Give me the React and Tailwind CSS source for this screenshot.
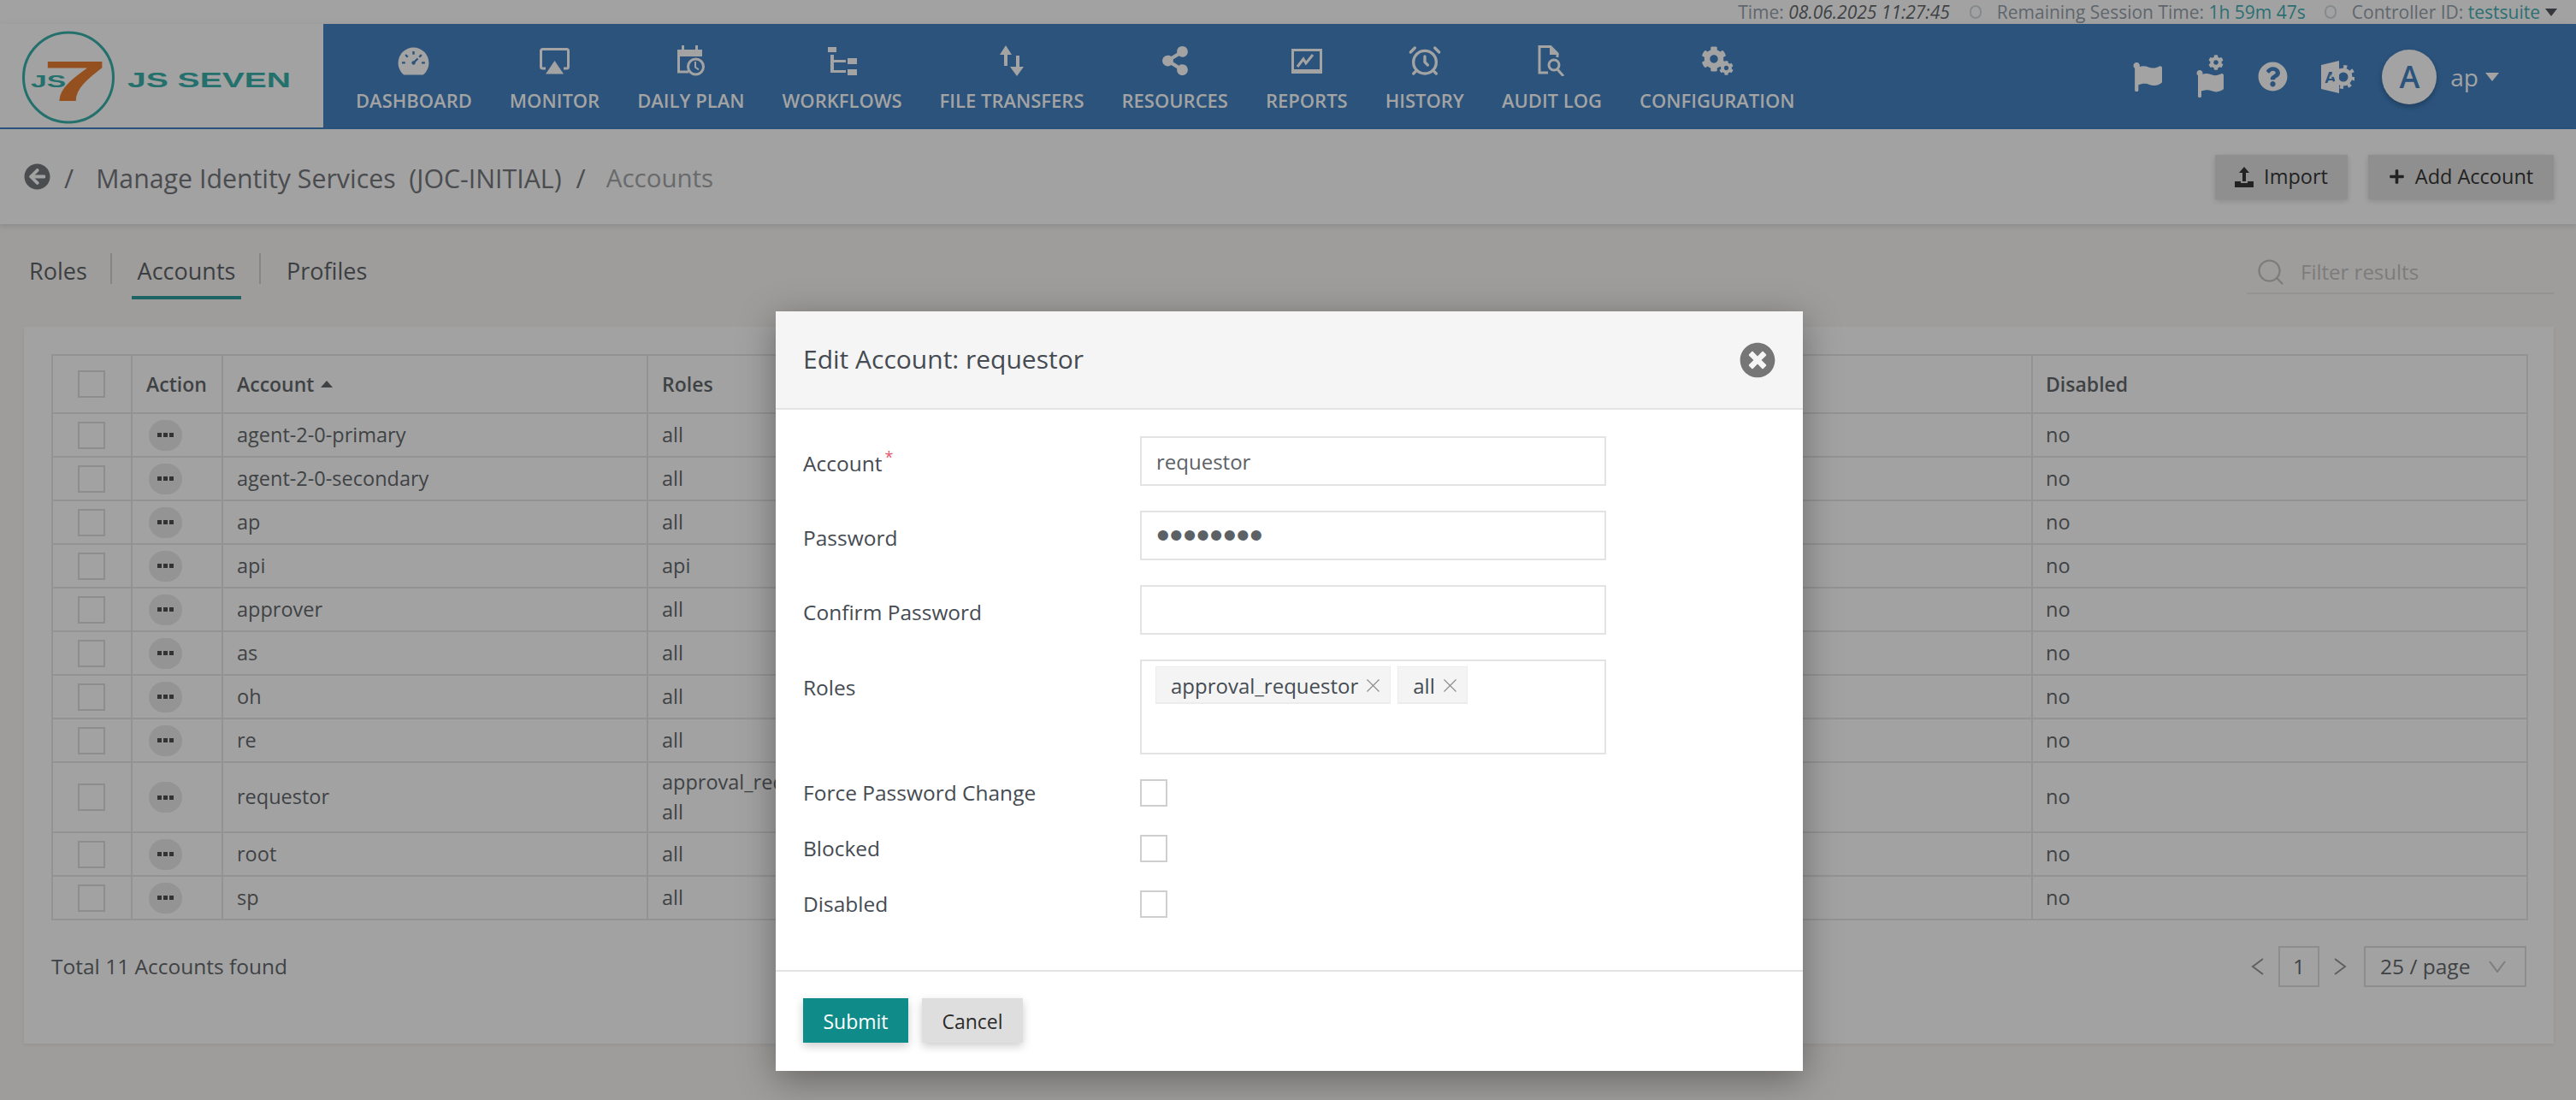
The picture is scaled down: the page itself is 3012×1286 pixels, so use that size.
import { AlarmClock, Search, X } from 'lucide-react'
import { AiFillDashboard } from 'react-icons/ai'
import { FaShareAlt, FaFlag, FaQuestionCircle, FaArrowCircleLeft, FaTimesCircle, FaPlus, FaCog } from 'react-icons/fa'

const ACCOUNTS = [
  { name: 'agent-2-0-primary', roles: ['all'] },
  { name: 'agent-2-0-secondary', roles: ['all'] },
  { name: 'ap', roles: ['all'] },
  { name: 'api', roles: ['api'] },
  { name: 'approver', roles: ['all'] },
  { name: 'as', roles: ['all'] },
  { name: 'oh', roles: ['all'] },
  { name: 're', roles: ['all'] },
  { name: 'requestor', roles: ['approval_requestor', 'all'] },
  { name: 'root', roles: ['all'] },
  { name: 'sp', roles: ['all'] },
]

function MonitorIcon() {
  return (
    <svg width="37" height="31" viewBox="0 0 37 31" fill="none">
      <path d="M8 24H4.500a2 2 0 0 1-2-2V3.500a2 2 0 0 1 2-2h28a2 2 0 0 1 2 2V22a2 2 0 0 1-2 2H29" stroke="#a3a3a3" strokeWidth="3" />
      <path d="M18.500 15L29 30.500H8z" fill="#a3a3a3" />
    </svg>
  )
}

function DailyPlanIcon() {
  return (
    <svg width="32" height="36" viewBox="0 0 32 36" fill="none">
      <path d="M5 0h3v5h13V0h3v5h5v8H0V5h5z" fill="#a3a3a3" />
      <path d="M1.500 12v19H13" stroke="#a3a3a3" strokeWidth="3" />
      <circle cx="21.500" cy="25" r="9" stroke="#a3a3a3" strokeWidth="3" />
      <path d="M21 19v6.500l4 3" stroke="#a3a3a3" strokeWidth="2" />
    </svg>
  )
}

function WorkflowIcon() {
  return (
    <svg width="34" height="33" viewBox="0 0 34 33" fill="#a3a3a3">
      <rect x="0" y="0" width="10" height="6" />
      <rect x="23" y="13" width="11" height="7" />
      <rect x="23" y="26" width="11" height="7" />
      <path d="M3 9h4v6h14v3H7v9h14v3H3z" />
    </svg>
  )
}

function TransferIcon() {
  return (
    <svg width="30" height="36" viewBox="0 0 30 36" fill="#a3a3a3">
      <path d="M8 0l7 11h-5v13H6V11H1z" />
      <path d="M20 12h4v13h5l-8 11-8-11h7z" />
    </svg>
  )
}

function ReportIcon() {
  return (
    <svg width="36" height="29" viewBox="0 0 36 29">
      <path d="M0 0h36v29H0zM3 3v21h30V3z" fill="#a3a3a3" />
      <path d="M7 21l7-9 3 5 8-10" fill="none" stroke="#a3a3a3" strokeWidth="3" />
    </svg>
  )
}

function AuditIcon() {
  return (
    <svg width="32" height="36" viewBox="0 0 32 36" fill="none">
      <path d="M12 32H2V1.500h13l8 8V14" stroke="#a3a3a3" strokeWidth="3" />
      <path d="M14 0l11 11H14z" fill="#a3a3a3" />
      <circle cx="19" cy="23" r="6" stroke="#a3a3a3" strokeWidth="3" />
      <path d="M23 28l7 8" stroke="#a3a3a3" strokeWidth="3" />
    </svg>
  )
}

function ConfigIcon() {
  return (
    <div className="relative w-[38px] h-[34px]">
      <FaCog size={30} className="absolute left-0 top-0" />
      <FaCog size={17} className="absolute right-0 bottom-0" />
    </div>
  )
}

const NAV = [
  { label: 'DASHBOARD', icon: <AiFillDashboard size={41} /> },
  { label: 'MONITOR', icon: <MonitorIcon /> },
  { label: 'DAILY PLAN', icon: <DailyPlanIcon /> },
  { label: 'WORKFLOWS', icon: <WorkflowIcon /> },
  { label: 'FILE TRANSFERS', icon: <TransferIcon /> },
  { label: 'RESOURCES', icon: <FaShareAlt size={34} /> },
  { label: 'REPORTS', icon: <ReportIcon /> },
  { label: 'HISTORY', icon: <AlarmClock size={40} strokeWidth={2} /> },
  { label: 'AUDIT LOG', icon: <AuditIcon /> },
  { label: 'CONFIGURATION', icon: <ConfigIcon /> },
]

function Logo() {
  return (
    <svg width="378" height="121" viewBox="0 28 378 121">
      <circle cx="80" cy="90.500" r="52.500" fill="none" stroke="#24706c" strokeWidth="3" />
      <text x="0" y="118" transform="translate(50 0) scale(2.050 1)" fontFamily="Liberation Sans" fontWeight="700" fontSize="66" fill="#95501f">7</text>
      <text x="36" y="102" fontFamily="Liberation Sans" fontWeight="700" fontSize="20" textLength="41" lengthAdjust="spacingAndGlyphs" fill="#24706c">JS</text>
      <text x="149" y="102" fontFamily="Liberation Sans" fontWeight="700" fontSize="23" textLength="191" lengthAdjust="spacingAndGlyphs" fill="#24706c">JS SEVEN</text>
    </svg>
  )
}

function TranslateIcon() {
  return (
    <svg width="39" height="38" viewBox="0 0 39 38">
      <path d="M0 5L21 0v38L0 33z" fill="#a3a3a3" />
      <text x="4" y="26" fontFamily="Liberation Sans" fontWeight="700" fontSize="19" fill="#2b537c">A</text>
      <circle cx="26" cy="19" r="8" fill="none" stroke="#a3a3a3" strokeWidth="5" />
      <circle cx="26" cy="19" r="12" fill="none" stroke="#a3a3a3" strokeWidth="4" strokeDasharray="4 5.400" />
    </svg>
  )
}

function Chevron({ d, width, height, stroke }) {
  return (
    <svg width={width} height={height} viewBox={`0 0 ${width} ${height}`} fill="none">
      <path d={d} stroke={stroke} strokeWidth="2" />
    </svg>
  )
}

function Checkbox({ dim }) {
  return <span className={`block w-[32px] h-[32px] border-2 ${dim ? 'border-[#8d8d8d]' : 'border-[#cfcfcf] bg-white'}`} />
}

function FormRow({ label, required, labelClass = '', alignTop, children }) {
  return (
    <div className={`flex ${alignTop ? 'items-start' : 'items-center'}`}>
      <label className={`w-[394px] shrink-0 text-[24.500px] leading-[32px] text-[#454b52] ${labelClass}`}>
        {label}
        {required && <span className="inline-block align-top -translate-y-[8px] text-[#e8566c] text-[18px] ml-[3px]">*</span>}
      </label>
      {children}
    </div>
  )
}

function TextBox({ children }) {
  return (
    <div className="w-[545px] h-[58px] border-2 border-[#e3e3e3] pl-[17px] flex items-center text-[24px] text-[#5c6166]">
      {children}
    </div>
  )
}

function RoleTag({ children }) {
  return (
    <span className="h-[44px] flex items-center gap-[4px] pl-[17px] pr-[6px] pt-[2px] bg-[#f4f4f4] border border-b-2 border-[#ececec] text-[24px] text-[#454b52]">
      {children}
      <X size={27} strokeWidth={1} className="text-[#8c8c8c]" />
    </span>
  )
}

function EditAccountModal() {
  return (
    <div className="absolute left-[907px] top-[364px] w-[1201px] h-[888px] bg-white shadow-[0_10px_40px_rgba(0,0,0,0.35)]">
      <div className="h-[115px] bg-[#f5f5f5] border-b-2 border-[#e3e3e3] px-[32px] flex items-center justify-between">
        <h2 className="text-[30px] text-[#454b52] font-normal -mt-[2px]">Edit Account: requestor</h2>
        <FaTimesCircle size={42} className="text-[#767676]" />
      </div>
      <div className="pl-[32px] pt-[31px] pb-[61px] flex flex-col gap-[29px]">
        <FormRow label="Account" required labelClass="pt-[5px]"><TextBox><span className="pt-[1px]">requestor</span></TextBox></FormRow>
        <FormRow label="Password" labelClass="pt-[5px]">
          <TextBox><span className="font-['Liberation_Sans',sans-serif] text-[44.500px] leading-none text-[#5c6166]">••••••••</span></TextBox>
        </FormRow>
        <FormRow label="Confirm Password" labelClass="pt-[5px]"><TextBox /></FormRow>
        <FormRow label="Roles" alignTop labelClass="mt-[17px]">
          <div className="w-[545px] h-[111px] border-2 border-[#e3e3e3] pl-[16px] pt-[6px] flex items-start gap-[8px]">
            <RoleTag>approval_requestor</RoleTag>
            <RoleTag>all</RoleTag>
          </div>
        </FormRow>
        <div className="flex flex-col gap-[33px]">
          <FormRow label="Force Password Change"><Checkbox /></FormRow>
          <FormRow label="Blocked"><Checkbox /></FormRow>
          <FormRow label="Disabled"><Checkbox /></FormRow>
        </div>
      </div>
      <div className="border-t-2 border-[#e3e3e3] pl-[32px] pt-[31px] flex gap-[16px]">
        <button className="w-[123px] h-[52px] pt-[2px] bg-[#0f8c89] text-white text-[23px] shadow-[0_4px_10px_rgba(0,0,0,0.2)]">Submit</button>
        <button className="w-[118px] h-[52px] pt-[2px] bg-[#dedede] text-[#2b2b2b] text-[23px] shadow-[0_4px_10px_rgba(0,0,0,0.2)]">Cancel</button>
      </div>
    </div>
  )
}

export default function App() {
  return (
    <div className="relative w-[3012px] h-[1286px] overflow-hidden bg-[#9e9d9b] font-['Open_Sans',sans-serif]">
      <div className="h-[28px] bg-[#a2a2a2] flex items-center justify-end pr-[22px] text-[21px] text-[#5f666d] leading-none">
        <span>Time: <i className="text-[#3f4245]">08.06.2025 11:27:45</i></span>
        <span className="w-[14px] h-[16px] ml-[23px] mr-[18px] rounded-full border-2 border-[#858a8d]" />
        <span>Remaining Session Time: <span className="text-[#2c6f73]">1h 59m 47s</span></span>
        <span className="w-[14px] h-[16px] ml-[22px] mr-[18px] rounded-full border-2 border-[#858a8d]" />
        <span>Controller ID: <span className="text-[#2c6f73]">testsuite</span></span>
        <span className="ml-[6px] w-0 h-0 border-x-[7px] border-x-transparent border-t-[9px] border-t-[#34383c]" />
      </div>

      <nav className="h-[123px] flex shadow-[0_6px_12px_rgba(0,0,0,0.15)] relative">
        <div className="w-[378px] bg-[#a2a2a2] border-b-2 border-[#2b537c] overflow-hidden">
          <Logo />
        </div>
        <div className="flex-1 bg-[#2b537c] flex items-start pl-[38px] text-[#a3a3a3]">
          <div className="flex gap-[44px]">
            {NAV.map(item => (
              <div key={item.label} className="flex flex-col items-center">
                <div className="h-[40px] mt-[23px] flex items-center justify-center">{item.icon}</div>
                <span className="mt-[10px] text-[22px] font-semibold leading-[32px] whitespace-nowrap">{item.label}</span>
              </div>
            ))}
          </div>
          <div className="ml-auto pr-[90px] h-full flex items-center gap-[40px]">
            <FaFlag size={34} />
            <div className="relative">
              <FaFlag size={32} className="mt-[16px]" />
              <FaCog size={18} className="absolute -top-[2px] right-0" />
            </div>
            <FaQuestionCircle size={35} />
            <div className="flex items-center gap-[32px] -ml-[1px]">
              <TranslateIcon />
              <div className="flex items-center">
                <span className="w-[64px] h-[64px] rounded-full bg-[#a3a3a3] flex items-center justify-center text-[36px] font-semibold text-[#2b537c] shadow-[0_3px_6px_rgba(0,0,0,0.25)]">A</span>
                <span className="ml-[16px] text-[28px]">ap</span>
                <span className="ml-[8px] w-0 h-0 border-x-[8px] border-x-transparent border-t-[10px] border-t-[#a3a3a3]" />
              </div>
            </div>
          </div>
        </div>
      </nav>

      <div className="h-[111px] bg-[#a2a2a2] flex items-center justify-between pl-[28px] pr-[26px] shadow-[0_3px_6px_rgba(0,0,0,0.1)] relative">
        <div className="flex items-center text-[30.300px] text-[#4a4c4f]">
          <FaArrowCircleLeft size={31} />
          <span className="ml-[16px] pt-[4px]">/</span>
          <span className="ml-[26px] pt-[4px] whitespace-pre">Manage Identity Services  (JOC-INITIAL)</span>
          <span className="ml-[17px] pt-[4px]">/</span>
          <span className="ml-[24px] pt-[4px] text-[29.500px] text-[#686a6c]">Accounts</span>
        </div>
        <div className="flex gap-[24px] text-[23.500px] text-[#222222]">
          <button className="w-[155px] h-[52px] bg-[#8f8f8f] flex items-center justify-center gap-[12px] shadow-[0_2px_6px_rgba(0,0,0,0.15)]">
            <svg width="22" height="24" viewBox="0 0 22 24" fill="#222222"><path d="M11 0l6 7h-4v10H9V7H5zM0 17h7v2h8v-2h7v7H0z" /></svg>
            Import
          </button>
          <button className="w-[217px] h-[52px] bg-[#8f8f8f] flex items-center justify-center gap-[12px] shadow-[0_2px_6px_rgba(0,0,0,0.15)]">
            <FaPlus size={19} />
            Add Account
          </button>
        </div>
      </div>

      <div className="h-[120px] flex items-start justify-between pl-[28px] pr-[26px]">
        <div className="flex items-start mt-[34px] text-[27px] text-[#3c3f42]">
          <span className="w-[101px] pl-[6px] h-[36px] leading-[42px]">Roles</span>
          <span className="w-[2px] h-[36px] bg-[#858585]" />
          <span className="ml-[23px] w-[128px] text-center h-[54px] leading-[42px] border-b-4 border-[#1e6464]">Accounts</span>
          <span className="ml-[21px] w-[2px] h-[36px] bg-[#858585]" />
          <span className="pl-[30px] h-[36px] leading-[42px]">Profiles</span>
        </div>
        <div className="w-[359px] h-[50px] mt-[32px] border-b-2 border-[#939393] flex items-center pl-[10px] gap-[17px] text-[24px] text-[#7c7c7c]">
          <Search size={36} strokeWidth={1.5} />
          Filter results
        </div>
      </div>

      <section className="ml-[28px] w-[2958px] h-[838px] bg-[#a2a2a2] shadow-[0_2px_4px_rgba(0,0,0,0.06)] pt-[32px] px-[32px]">
        <table className="w-[2894px] table-fixed border-collapse text-[23.500px] text-[#3f4245]">
          <colgroup>
            <col className="w-[93px]" />
            <col className="w-[106px]" />
            <col className="w-[497px]" />
            <col className="w-[1619px]" />
            <col className="w-[579px]" />
          </colgroup>
          <thead>
            <tr className="h-[68px] text-left">
              <th className="border-2 border-[#939393] px-[29px] font-normal"><Checkbox dim /></th>
              <th className="border-2 border-[#939393] pl-[16px] font-semibold text-[23px]">Action</th>
              <th className="border-2 border-[#939393] pl-[16px] font-semibold text-[23px]">
                <span className="inline-flex items-center gap-[8px]">
                  Account
                  <span className="w-0 h-0 border-x-[7px] border-x-transparent border-b-[8px] border-b-[#3f4245]" />
                </span>
              </th>
              <th className="border-2 border-[#939393] pl-[16px] font-semibold text-[23px]">Roles</th>
              <th className="border-2 border-[#939393] pl-[15px] font-semibold text-[23px]">Disabled</th>
            </tr>
          </thead>
          <tbody>
            {ACCOUNTS.map(acc => (
              <tr key={acc.name} className={acc.roles.length > 1 ? 'h-[82px]' : 'h-[51px]'}>
                <td className="border-2 border-[#939393] px-[29px] p-0"><Checkbox dim /></td>
                <td className="border-2 border-[#939393] pl-[19px] p-0">
                  <span className="w-[39px] h-[36px] rounded-full bg-[#949494] flex items-center justify-center gap-[2px]">
                    <i className="w-[5px] h-[5px] bg-[#333333]" />
                    <i className="w-[5px] h-[5px] bg-[#333333]" />
                    <i className="w-[5px] h-[5px] bg-[#333333]" />
                  </span>
                </td>
                <td className="border-2 border-[#939393] pl-[16px] py-0">{acc.name}</td>
                <td className="border-2 border-[#939393] pl-[16px] py-0 leading-[35px]">
                  {acc.roles.map(r => <div key={r}>{r}</div>)}
                </td>
                <td className="border-2 border-[#939393] pl-[15px] py-0">no</td>
              </tr>
            ))}
          </tbody>
        </table>

        <div className="mt-[30px] flex items-center justify-between text-[24.500px] text-[#3f4245]">
          <span>Total 11 Accounts found</span>
          <div className="flex items-center">
            <Chevron width={15} height={20} d="M14 1L2 10l12 9" stroke="#5e6163" />
            <span className="ml-[17px] w-[48px] h-[48px] border-2 border-[#8d8d8d] flex items-center justify-center">1</span>
            <span className="ml-[17px]"><Chevron width={15} height={20} d="M1 1l12 9L1 19" stroke="#5e6163" /></span>
            <span className="ml-[20px] w-[190px] h-[48px] border-2 border-[#8d8d8d] pl-[17px] flex items-center justify-between pr-[22px]">
              25 / page
              <Chevron width={20} height={14} d="M1 1l9 12L19 1" stroke="#7d7d7d" />
            </span>
          </div>
        </div>
      </section>

      <EditAccountModal />
    </div>
  )
}
